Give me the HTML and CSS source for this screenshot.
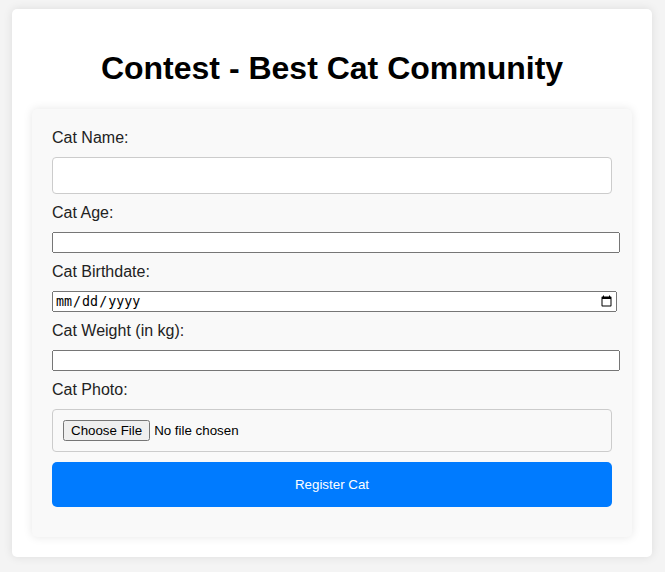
FILE: index.html
```html
<!DOCTYPE html>
<html lang="en">
<head>
<meta charset="utf-8">
<title>Contest - Best Cat Community</title>
<link rel="stylesheet" href="styles.css">
</head>
<body>
<div class="container">
  <h1>Contest - Best Cat Community</h1>
  <form class="cat-form" onsubmit="return false;">
    <label for="name">Cat Name:</label>
    <input type="text" id="name" class="text-input">
    <label for="age">Cat Age:</label>
    <input type="number" id="age" class="plain-input">
    <label for="birth">Cat Birthdate:</label>
    <input type="date" id="birth" class="plain-input">
    <label for="weight">Cat Weight (in kg):</label>
    <input type="number" id="weight" class="plain-input">
    <label for="photo">Cat Photo:</label>
    <input type="file" id="photo" class="file-input">
    <button type="submit" class="submit-btn">Register Cat</button>
  </form>
</div>
</body>
</html>
```

FILE: styles.css
```css
body {
  margin: 0;
  padding-right: 1px;
  background: #f4f4f4;
  font-family: "Liberation Sans", Arial, sans-serif;
}

.container {
  max-width: 600px;
  margin: 9px auto 10px;
  padding: 20px;
  background: #fff;
  border-radius: 5px;
  box-shadow: 0 0 10px rgba(0, 0, 0, 0.1);
}

h1 {
  text-align: center;
  font-size: 32px;
  color: #000;
}

.cat-form {
  display: flex;
  flex-direction: column;
  align-items: flex-start;
  padding: 20px;
  background: #f9f9f9;
  border-radius: 5px;
  box-shadow: 0 0 10px rgba(0, 0, 0, 0.1);
}

.cat-form label {
  display: block;
  margin-bottom: 10px;
  font-size: 16px;
  color: #222;
}

.cat-form input {
  width: 100%;
  margin: 0 0 10px 0;
}

.text-input,
.file-input {
  padding: 10px;
  border: 1px solid #ccc;
  border-radius: 4px;
  box-sizing: border-box;
}

.file-input {
  font-family: "Liberation Sans", Arial, sans-serif;
  font-size: 13.33px;
}

.submit-btn {
  width: 100%;
  margin-bottom: 10px;
  padding: 15px;
  border: none;
  border-radius: 5px;
  background: #007bff;
  color: #fff;
  font-family: "Liberation Sans", Arial, sans-serif;
  font-size: 13.33px;
  cursor: pointer;
}
```
